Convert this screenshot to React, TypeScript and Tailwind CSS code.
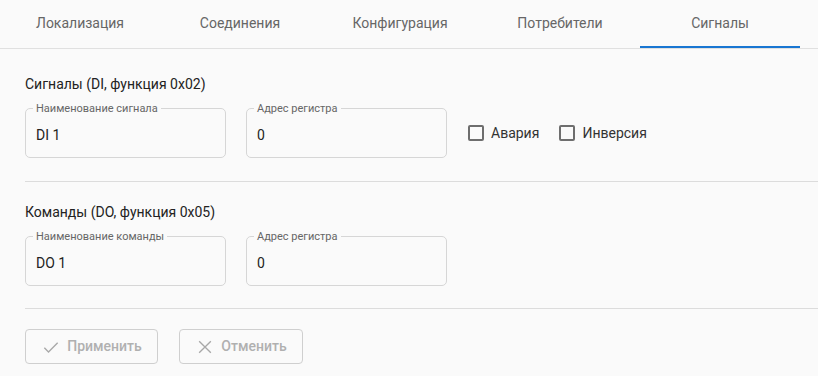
/**
 * Signals tab — Modbus DI/DO mapping form.
 */
import { useState } from 'react';

const tabs = ['Локализация', 'Соединения', 'Конфигурация', 'Потребители', 'Сигналы'];

function OutlinedField({ label, value }: { label: string; value: string }) {
  return (
    <div className="relative w-[201px] h-[50px] rounded-[5px] border border-[#d6d6d6] flex items-center px-[10px] pt-[3px]">
      <span className="absolute -top-[7px] left-[7px] px-[3px] bg-[#fafafa] text-[11px] leading-[13px] text-[#666]">
        {label}
      </span>
      <span className="text-[14px] leading-[18px] text-[#222]">{value}</span>
    </div>
  );
}

function Check({ label }: { label: string }) {
  const [on, setOn] = useState(false);
  return (
    <label className="flex items-center gap-[7px] cursor-pointer" onClick={() => setOn(!on)}>
      <span className="w-[16px] h-[16px] rounded-[2px] border-2 border-[#6e6e6e]" data-on={on} />
      <span className="text-[14px] text-[#333]">{label}</span>
    </label>
  );
}

export default function App() {
  const active = 4;

  return (
    <div
      className="w-[818px] h-[376px] bg-[#fafafa] overflow-hidden"
      style={{ fontFamily: 'Roboto, "Liberation Sans", sans-serif' }}
    >
      <div className="flex h-[49px] border-b border-[#e0e0e0]">
        {tabs.map((t, i) => (
          <div
            key={t}
            className="relative w-[160px] flex items-center justify-center text-[14px] text-[#666]"
          >
            <span className="-mt-[2px]">{t}</span>
            {i === active && <div className="absolute left-0 right-0 bottom-0 h-[2px] bg-[#1976d2]" />}
          </div>
        ))}
      </div>

      <div className="pl-[25px]">
        <div className="pt-[26px] text-[14px] leading-[18px] text-[#222]">Сигналы (DI, функция 0x02)</div>
        <div className="flex items-center gap-[20px] mt-[15px]">
          <OutlinedField label="Наименование сигнала" value="DI 1" />
          <OutlinedField label="Адрес регистра" value="0" />
          <div className="flex items-center gap-[20px] pl-[1px]">
            <Check label="Авария" />
            <Check label="Инверсия" />
          </div>
        </div>
        <div className="mt-[23px] border-t border-[#dcdcdc]" />

        <div className="pt-[21px] text-[14px] leading-[18px] text-[#222]">Команды (DO, функция 0x05)</div>
        <div className="flex items-center gap-[20px] mt-[15px]">
          <OutlinedField label="Наименование команды" value="DO 1" />
          <OutlinedField label="Адрес регистра" value="0" />
        </div>
        <div className="mt-[22px] border-t border-[#dcdcdc]" />

        <div className="flex gap-[21px] pt-[20px]">
          <button
            disabled
            className="w-[133px] h-[35px] flex items-center justify-center gap-[6px] rounded-[4px] border border-[#cfcfcf] text-[14px] font-medium text-[#b0b0b0]"
          >
            <svg width="20" height="20" viewBox="0 0 24 24" fill="none" stroke="#a8a8a8" strokeWidth="1.6">
              <path d="M4 13l5 5L20 7" />
            </svg>
            Применить
          </button>
          <button
            disabled
            className="w-[124px] h-[35px] flex items-center justify-center gap-[6px] rounded-[4px] border border-[#cfcfcf] text-[14px] font-medium text-[#b0b0b0]"
          >
            <svg width="20" height="20" viewBox="0 0 24 24" fill="none" stroke="#a8a8a8" strokeWidth="1.6">
              <path d="M5 5l14 14M19 5L5 19" />
            </svg>
            Отменить
          </button>
        </div>
      </div>
    </div>
  );
}
